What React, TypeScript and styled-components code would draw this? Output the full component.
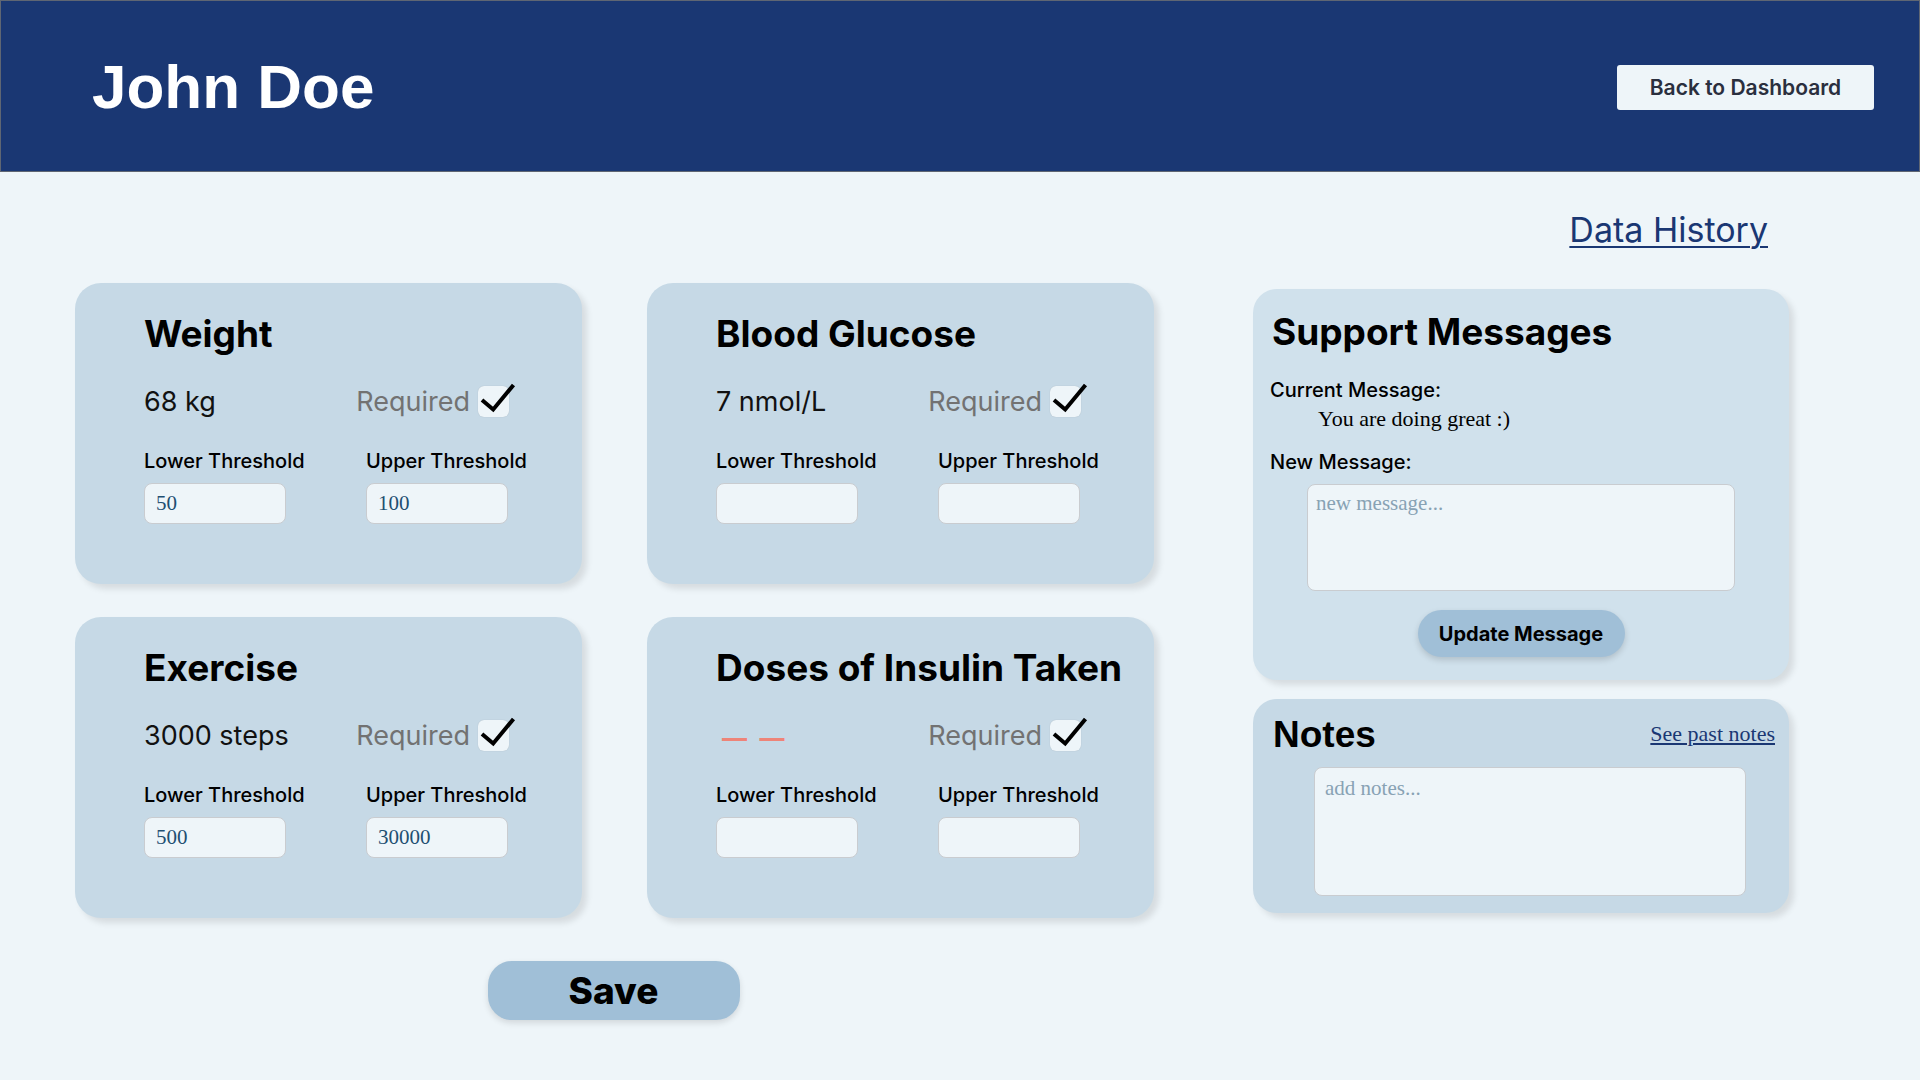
import React from "react";
import styled, { createGlobalStyle } from "styled-components";

const GlobalStyle = createGlobalStyle`
    html, body {
        margin: 0;
        padding: 0;
        background-color: #eef5f9;
    }
    * {
        box-sizing: border-box;
    }
`;

const sans = `"Inter", "Noto Sans", sans-serif`;
const serif = `"Liberation Serif", "DejaVu Serif", serif`;

const Page = styled.div`
    width: 1920px;
    min-height: 1080px;
    background-color: #eef5f9;
    font-family: ${sans};
`;

const Header = styled.header`
    height: 172px;
    display: flex;
    align-items: center;
    justify-content: space-between;
    padding: 0 45px 0 91px;
    background-color: #1a3773;
    border: 1px solid #5f6673;
`;

const PatientName = styled.h1`
    margin: 0;
    font-family: "Liberation Sans", Arial, sans-serif;
    font-size: 62px;
    font-weight: 700;
    color: #fff;
`;

const BackButton = styled.button`
    width: 257px;
    height: 45px;
    margin-top: 2px;
    border: none;
    border-radius: 3px;
    background-color: #eef5f9;
    color: #2a2f3e;
    font-family: ${sans};
    font-size: 21px;
    font-weight: 600;
    cursor: pointer;
`;

const Main = styled.main`
    display: flex;
    gap: 99px;
    padding-left: 75px;
`;

const LeftColumn = styled.section`
    width: 1079px;
    padding-top: 111px;
    display: flex;
    flex-direction: column;
    align-items: center;
`;

const CardGrid = styled.div`
    display: grid;
    grid-template-columns: 507px 507px;
    grid-auto-rows: 301px;
    column-gap: 65px;
    row-gap: 33px;
`;

const Card = styled.div`
    background-color: #c6d9e6;
    border-radius: 26px;
    padding: 28px 0 0 69px;
    box-shadow: 5px 5px 6px rgba(0, 0, 0, 0.1);
`;

const CardTitle = styled.h2`
    margin: 0;
    height: 46px;
    font-size: 37px;
    line-height: 46px;
    font-weight: 700;
    color: #000;
    white-space: nowrap;
`;

const ValueRow = styled.div`
    width: 365px;
    height: 31px;
    margin-top: 29px;
    display: flex;
    align-items: center;
    justify-content: space-between;
`;

const Value = styled.span`
    font-size: 27px;
    color: #111;
`;

const Missing = styled.span`
    font-family: "Liberation Sans", Arial, sans-serif;
    font-size: 45px;
    line-height: 31px;
    color: #ee8478;
    margin-left: 6px;
`;

const RequiredGroup = styled.label`
    display: flex;
    align-items: center;
    gap: 8px;
`;

const RequiredText = styled.span`
    font-size: 27px;
    color: #727272;
`;

const CheckBox = styled.span`
    position: relative;
    width: 31px;
    height: 31px;
    border-radius: 6px;
    background-color: #eef5f9;
    box-shadow: 0 0 1px rgba(0, 0, 0, 0.2);

    svg {
        position: absolute;
        left: 0;
        top: 0;
        overflow: visible;
    }
`;

const Thresholds = styled.div`
    display: grid;
    grid-template-columns: 222px 142px;
    margin-top: 32px;
`;

const Field = styled.div`
    display: flex;
    flex-direction: column;
    gap: 10px;
`;

const Label = styled.span`
    font-size: 20px;
    line-height: 24px;
    font-weight: 500;
    color: #000;
    white-space: nowrap;
`;

const NumberInput = styled.input`
    width: 142px;
    height: 41px;
    padding: 0 11px;
    border: 1px solid #c9ccd0;
    border-radius: 8px;
    background-color: #eef5f9;
    font-family: ${serif};
    font-size: 21px;
    color: #1e4f72;
    &:focus {
        outline: none;
    }
`;

const SaveButton = styled.button`
    width: 252px;
    height: 59px;
    margin-top: 43px;
    margin-left: -2px;
    border: none;
    border-radius: 24px;
    background-color: #a0bfd7;
    box-shadow: 0 3px 6px rgba(0, 0, 0, 0.12);
    font-family: ${sans};
    font-size: 37px;
    font-weight: 800;
    color: #000;
    cursor: pointer;
`;

const RightColumn = styled.aside`
    width: 536px;
    display: flex;
    flex-direction: column;
`;

const DataHistory = styled.a`
    align-self: flex-end;
    margin: 38px 21px 0 0;
    font-size: 34px;
    line-height: 40px;
    color: #1a3773;
    text-decoration: underline;
    text-decoration-thickness: 2px;
    text-underline-offset: 4px;
    cursor: pointer;
`;

const SupportCard = styled.div`
    height: 391px;
    margin-top: 39px;
    padding: 21px 17px 0;
    border-radius: 24px;
    background-color: #d0e1ec;
    box-shadow: 5px 5px 6px rgba(0, 0, 0, 0.1);
    display: flex;
    flex-direction: column;
`;

const PanelTitle = styled.h2`
    margin: 0 0 0 2px;
    font-size: 37px;
    line-height: 44px;
    font-weight: 700;
    color: #000;
`;

const SmallHeading = styled.span<{ $gap: number }>`
    margin-top: ${(p) => p.$gap}px;
    font-size: 20px;
    line-height: 24px;
    font-weight: 500;
    color: #000;
`;

const CurrentMessage = styled.p`
    margin: 4px 0 0 48px;
    font-family: ${serif};
    font-size: 22px;
    line-height: 26px;
    color: #000;
`;

const MessageArea = styled.textarea`
    align-self: center;
    width: 428px;
    height: 107px;
    margin-top: 10px;
    padding: 6px 8px;
    resize: none;
    border: 1px solid #c9ccd0;
    border-radius: 8px;
    background-color: #eef5f9;
    font-family: ${serif};
    font-size: 21px;
    color: #1e4f72;
    &::placeholder {
        color: #88a2b4;
    }
    &:focus {
        outline: none;
    }
`;

const UpdateButton = styled.button`
    align-self: center;
    width: 207px;
    height: 47px;
    margin-top: 19px;
    border: none;
    border-radius: 24px;
    background-color: #a0bfd7;
    box-shadow: 0 3px 6px rgba(0, 0, 0, 0.15);
    font-family: ${sans};
    font-size: 20px;
    font-weight: 700;
    color: #000;
    cursor: pointer;
`;

const NotesCard = styled.div`
    height: 214px;
    margin-top: 19px;
    padding: 15px 14px 0 20px;
    border-radius: 24px;
    background-color: #c6d9e6;
    box-shadow: 5px 5px 6px rgba(0, 0, 0, 0.1);
    display: flex;
    flex-direction: column;
`;

const NotesHeader = styled.div`
    display: flex;
    justify-content: space-between;
    align-items: flex-start;
`;

const NotesTitle = styled.h2`
    margin: 0;
    font-family: "Liberation Sans", Arial, sans-serif;
    font-size: 37px;
    line-height: 42px;
    font-weight: 700;
    color: #000;
`;

const PastNotesLink = styled.a`
    margin-top: 7px;
    font-family: ${serif};
    font-size: 22px;
    line-height: 26px;
    color: #1a3773;
    text-decoration: underline;
    cursor: pointer;
`;

const NotesArea = styled(MessageArea)`
    align-self: flex-start;
    width: 432px;
    height: 129px;
    margin: 11px 0 0 41px;
    padding: 8px 10px;
`;

const CheckMark = () => (
    <svg width="31" height="31" viewBox="0 0 31 31">
        <path d="M4 14 L15.2 23.5 L35.5 -1" fill="none" stroke="#000" strokeWidth="4" />
    </svg>
);

type Metric = {
    title: string;
    value?: string;
    lower: string;
    upper: string;
};

const metrics: Metric[] = [
    { title: "Weight", value: "68 kg", lower: "50", upper: "100" },
    { title: "Blood Glucose", value: "7 nmol/L", lower: "", upper: "" },
    { title: "Exercise", value: "3000 steps", lower: "500", upper: "30000" },
    { title: "Doses of Insulin Taken", lower: "", upper: "" },
];

const MetricCard = ({ metric }: { metric: Metric }) => (
    <Card>
        <CardTitle>{metric.title}</CardTitle>
        <ValueRow>
            {metric.value ? <Value>{metric.value}</Value> : <Missing>– –</Missing>}
            <RequiredGroup>
                <RequiredText>Required</RequiredText>
                <CheckBox>
                    <CheckMark />
                </CheckBox>
            </RequiredGroup>
        </ValueRow>
        <Thresholds>
            <Field>
                <Label>Lower Threshold</Label>
                <NumberInput type="text" defaultValue={metric.lower} />
            </Field>
            <Field>
                <Label>Upper Threshold</Label>
                <NumberInput type="text" defaultValue={metric.upper} />
            </Field>
        </Thresholds>
    </Card>
);

export default function App() {
    return (
        <Page>
            <GlobalStyle />
            <Header>
                <PatientName>John Doe</PatientName>
                <BackButton>Back to Dashboard</BackButton>
            </Header>
            <Main>
                <LeftColumn>
                    <CardGrid>
                        {metrics.map((m) => (
                            <MetricCard key={m.title} metric={m} />
                        ))}
                    </CardGrid>
                    <SaveButton>Save</SaveButton>
                </LeftColumn>
                <RightColumn>
                    <DataHistory>Data History</DataHistory>
                    <SupportCard>
                        <PanelTitle>Support Messages</PanelTitle>
                        <SmallHeading $gap={24}>Current Message:</SmallHeading>
                        <CurrentMessage>You are doing great :)</CurrentMessage>
                        <SmallHeading $gap={18}>New Message:</SmallHeading>
                        <MessageArea placeholder="new message..." />
                        <UpdateButton>Update Message</UpdateButton>
                    </SupportCard>
                    <NotesCard>
                        <NotesHeader>
                            <NotesTitle>Notes</NotesTitle>
                            <PastNotesLink>See past notes</PastNotesLink>
                        </NotesHeader>
                        <NotesArea placeholder="add notes..." />
                    </NotesCard>
                </RightColumn>
            </Main>
        </Page>
    );
}
